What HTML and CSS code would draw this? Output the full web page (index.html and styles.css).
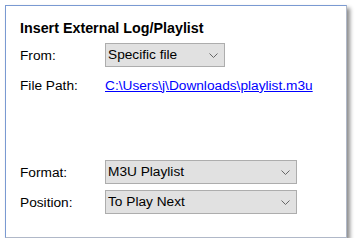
FILE: index.html
```html
<!DOCTYPE html>
<html lang="en">
<head>
    <meta charset="UTF-8">
    <title>Insert External Log/Playlist</title>
    <link rel="stylesheet" href="styles.css">
</head>
<body>
    <div class="panel">
        <h1>Insert External Log/Playlist</h1>
        <div class="row">
            <span class="label">From:</span>
            <div class="select short">Specific file<svg class="arrow" width="9" height="5" viewBox="0 0 9 5"><path d="M0.5 0.5 L4.5 4.5 L8.5 0.5" fill="none" stroke="#666" stroke-width="1"/></svg></div>
        </div>
        <div class="row">
            <span class="label">File Path:</span>
            <a class="path" href="#">C:\Users\j\Downloads\playlist.m3u</a>
        </div>
        <div class="spacer"></div>
        <div class="row">
            <span class="label">Format:</span>
            <div class="select">M3U Playlist<svg class="arrow" width="9" height="5" viewBox="0 0 9 5"><path d="M0.5 0.5 L4.5 4.5 L8.5 0.5" fill="none" stroke="#666" stroke-width="1"/></svg></div>
        </div>
        <div class="row">
            <span class="label">Position:</span>
            <div class="select">To Play Next<svg class="arrow" width="9" height="5" viewBox="0 0 9 5"><path d="M0.5 0.5 L4.5 4.5 L8.5 0.5" fill="none" stroke="#666" stroke-width="1"/></svg></div>
        </div>
    </div>
</body>
</html>
```

FILE: styles.css
```css
body {
    margin: 0;
    background: #fff;
    font-family: "Liberation Sans", Arial, sans-serif;
    font-size: 13.7px;
    color: #000;
}
.panel {
    margin: 5px 0 0 5px;
    width: 342px;
    height: 233px;
    box-sizing: border-box;
    border: 1px solid #7a9ad2;
    border-right-color: #b0b8c8;
    border-bottom-color: #b0b8c8;
    box-shadow: 3px 3px 4px rgba(0, 0, 0, 0.45);
    padding: 14px 14px 0 14px;
}
h1 {
    font-size: 14.3px;
    line-height: 16px;
    font-weight: bold;
    margin: 0 0 7px 0;
}
.row {
    display: flex;
    align-items: center;
    height: 24px;
    margin-bottom: 6px;
}
.label {
    width: 85px;
}
.select {
    position: relative;
    box-sizing: border-box;
    width: 192px;
    height: 24px;
    line-height: 22px;
    padding-left: 2px;
    background: #e1e1e1;
    border: 1px solid #adadad;
}
.select.short {
    width: 120px;
}
.arrow {
    position: absolute;
    right: 6px;
    top: 9px;
}
.path {
    color: #0000ff;
    text-decoration: underline;
}
.spacer {
    height: 57px;
}
```
